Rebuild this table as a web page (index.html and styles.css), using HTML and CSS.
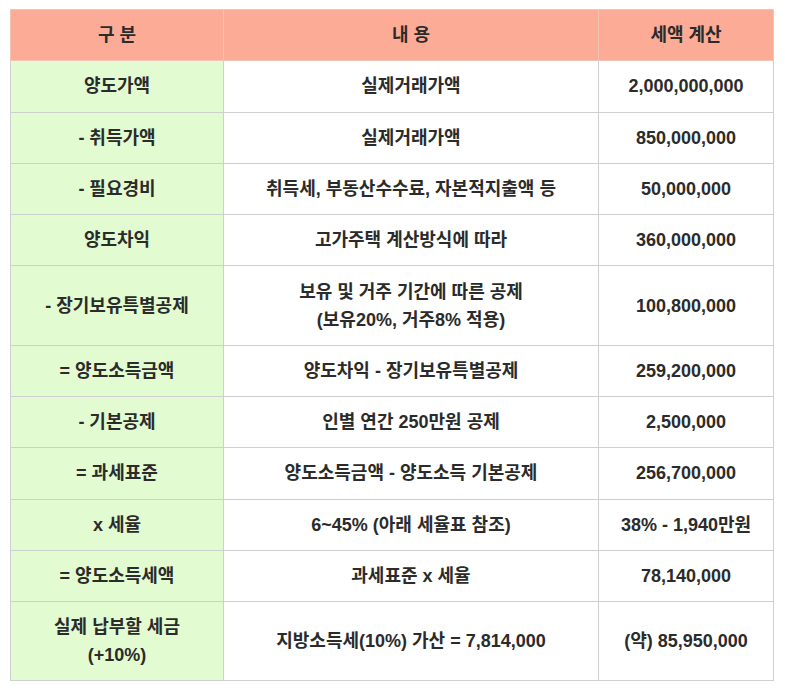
FILE: index.html
```html
<!DOCTYPE html>
<html lang="ko">
<head>
<meta charset="utf-8">
<title>양도소득세 계산</title>
<link rel="stylesheet" href="styles.css">
</head>
<body>
<table class="tax">
  <colgroup>
    <col class="c1"><col class="c2"><col class="c3">
  </colgroup>
  <thead>
    <tr><th>구 분</th><th>내 용</th><th>세액 계산</th></tr>
  </thead>
  <tbody>
    <tr><td class="lbl">양도가액</td><td>실제거래가액</td><td>2,000,000,000</td></tr>
    <tr><td class="lbl">- 취득가액</td><td>실제거래가액</td><td>850,000,000</td></tr>
    <tr><td class="lbl">- 필요경비</td><td>취득세, 부동산수수료, 자본적지출액 등</td><td>50,000,000</td></tr>
    <tr><td class="lbl">양도차익</td><td>고가주택 계산방식에 따라</td><td>360,000,000</td></tr>
    <tr><td class="lbl">- 장기보유특별공제</td><td>보유 및 거주 기간에 따른 공제<br>(보유20%, 거주8% 적용)</td><td>100,800,000</td></tr>
    <tr><td class="lbl">= 양도소득금액</td><td>양도차익 - 장기보유특별공제</td><td>259,200,000</td></tr>
    <tr><td class="lbl">- 기본공제</td><td>인별 연간 250만원 공제</td><td>2,500,000</td></tr>
    <tr><td class="lbl">= 과세표준</td><td>양도소득금액 - 양도소득 기본공제</td><td>256,700,000</td></tr>
    <tr><td class="lbl">x 세율</td><td>6~45% (아래 세율표 참조)</td><td>38% - 1,940만원</td></tr>
    <tr><td class="lbl">= 양도소득세액</td><td>과세표준 x 세율</td><td>78,140,000</td></tr>
    <tr><td class="lbl">실제 납부할 세금<br>(+10%)</td><td>지방소득세(10%) 가산 = 7,814,000</td><td>(약) 85,950,000</td></tr>
  </tbody>
</table>
</body>
</html>
```
FILE: styles.css
```css
body {
  margin: 9px 10px;
  background: #ffffff;
  font-family: "Liberation Sans", "Noto Sans CJK KR", Arial, sans-serif;
  color: #2b2b2b;
}
.tax {
  width: 763px;
  border-collapse: collapse;
  table-layout: fixed;
  font-size: 18px;
  font-weight: bold;
}
.c1 { width: 213px; }
.c2 { width: 375px; }
.c3 { width: 175px; }
.tax th,
.tax td {
  border: 1px solid #cfcfcf;
  padding: 11.15px 6px;
  line-height: 28px;
  text-align: center;
  vertical-align: middle;
}
.tax th {
  background: #fcab96;
  font-weight: bold;
  border-color: #f3c3b5;
}
.tax td {
  background: #ffffff;
}
.tax td.lbl {
  background: #e3fbd0;
}
```
